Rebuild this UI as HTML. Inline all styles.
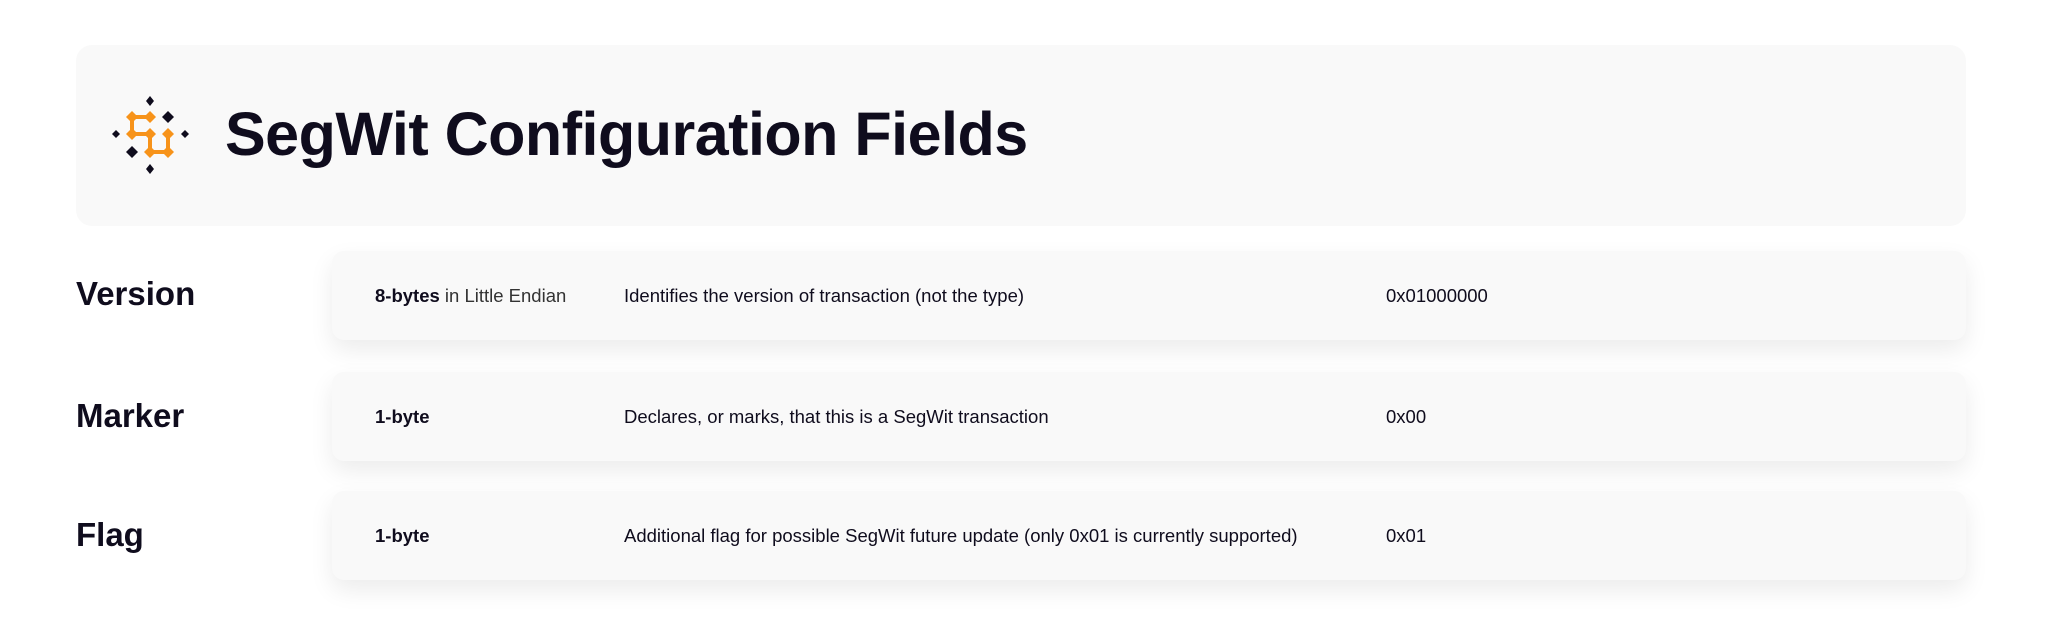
<!DOCTYPE html>
<html><head><meta charset="utf-8"><style>
*{margin:0;padding:0;box-sizing:border-box}
body{width:2048px;height:620px;background:#fff;font-family:"Liberation Sans",sans-serif;color:#0f0c1d;position:relative;overflow:hidden}
.hdr{position:absolute;left:76px;top:45px;width:1890px;height:181px;background:#f9f9f9;border-radius:16px}
.title{position:absolute;left:225px;top:98px;font-size:61px;font-weight:700;letter-spacing:-0.5px;line-height:72px;white-space:nowrap}
.lbl{position:absolute;left:76px;font-size:33px;font-weight:700;line-height:40px}
.row{position:absolute;left:332px;width:1634px;height:89px;background:#f9f9f9;border-radius:12px;box-shadow:0 10px 24px rgba(0,0,0,0.08)}
.row span{position:absolute;top:0;line-height:89px;font-size:18.5px;white-space:nowrap}
.c1{left:43px}.c2{left:292px}.c3{left:1054px}
b{font-weight:700}
.g{color:#333}
</style></head><body>
<div class="hdr"></div>
<svg style="position:absolute;left:100px;top:80px" width="110" height="110" viewBox="100 80 110 110">
<g stroke="#f7931a" stroke-width="4" fill="none">
<path d="M132 117H150M132 117V134H150V152H168V134"/></g>
<g fill="#f7931a">
<path d="M132 111l6 6-6 6-6-6z"/><path d="M150 111l6 6-6 6-6-6z"/><path d="M132 128l6 6-6 6-6-6z"/><path d="M150 128l6 6-6 6-6-6z"/><path d="M168 128l6 6-6 6-6-6z"/><path d="M150 146l6 6-6 6-6-6z"/><path d="M168 146l6 6-6 6-6-6z"/></g>
<g fill="#0f0c1d">
<path d="M150 96l4 5-4 5-4-5z"/><path d="M168 111l6 6-6 6-6-6z"/><path d="M116 130l4 4-4 4-4-4z"/><path d="M185 130l4 4-4 4-4-4z"/><path d="M132 146l6 6-6 6-6-6z"/><path d="M150 164l4 5-4 5-4-5z"/></g>
</svg>
<div class="title">SegWit Configuration Fields</div>

<div class="lbl" style="top:274px">Version</div>
<div class="row" style="top:251px"><span class="c1"><b>8-bytes</b> <span class="g" style="position:static;line-height:normal">in Little Endian</span></span><span class="c2">Identifies the version of transaction (not the type)</span><span class="c3">0x01000000</span></div>

<div class="lbl" style="top:396px">Marker</div>
<div class="row" style="top:372px"><span class="c1"><b>1-byte</b></span><span class="c2">Declares, or marks, that this is a SegWit transaction</span><span class="c3">0x00</span></div>

<div class="lbl" style="top:515px">Flag</div>
<div class="row" style="top:491px"><span class="c1"><b>1-byte</b></span><span class="c2">Additional flag for possible SegWit future update (only 0x01 is currently supported)</span><span class="c3">0x01</span></div>
</body></html>
